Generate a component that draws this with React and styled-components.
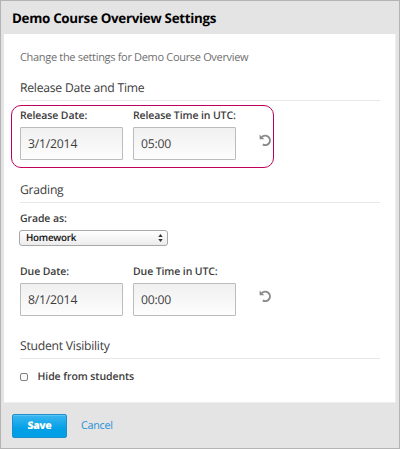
import React from "react";
import styled, { createGlobalStyle } from "styled-components";

const Global = createGlobalStyle`
  *, *::before, *::after { box-sizing: border-box; }
  body { margin: 0; font-family: "Open Sans", "Noto Sans", sans-serif; color: #3c3c3c; text-rendering: geometricPrecision; }
  input, button { text-rendering: inherit; }
`;

const Modal = styled.div`
  width: 400px;
  height: 449px;
  display: flex;
  flex-direction: column;
  background: #e4e4e4;
  border: 1px solid #b4b4b4;
`;

const Title = styled.h1`
  margin: 0;
  height: 33px;
  padding-left: 11px;
  font-size: 13.4px;
  line-height: 34px;
  font-weight: 700;
  letter-spacing: -0.32px;
  color: #000;
`;

const Panel = styled.main`
  width: 392px;
  height: 369px;
  margin-left: 3px;
  padding: 15px 16px 0;
  background: #fff;
  border-right: 1px solid #efefef;
  border-bottom: 1px solid #efefef;
`;

const Intro = styled.p`
  margin: 0;
  height: 16px;
  font-size: 11px;
  line-height: 17px;
  letter-spacing: -0.32px;
  color: #707070;
`;

const Section = styled.section`
  margin-top: ${(p) => p.$gap}px;
`;

const Heading = styled.h2`
  margin: 0;
  width: 360px;
  height: 23px;
  border-bottom: 1px solid #e8e8e8;
  font-size: 12.2px;
  line-height: 20px;
  letter-spacing: -0.25px;
  font-weight: 400;
`;

const Fields = styled.div`
  position: relative;
  display: grid;
  grid-template-columns: 103px 103px 14px;
  column-gap: 10px;
  align-items: start;
  margin-top: ${(p) => p.$gap}px;
`;

const Highlight = styled.div`
  position: absolute;
  left: -9px;
  top: -2px;
  width: 263px;
  height: 63px;
  border: 1px solid #c0005c;
  border-radius: 10px;
  pointer-events: none;
`;

const Label = styled.label`
  display: block;
  height: 20px;
  font-size: 10.5px;
  line-height: 18px;
  letter-spacing: -0.11px;
  font-weight: 600;
  white-space: nowrap;
`;

const Input = styled.input`
  display: block;
  width: 103px;
  height: 33px;
  padding: 0 7px;
  border: 1px solid #bcbcbc;
  border-radius: 1px;
  background: linear-gradient(#f0f0f0, #fdfdfd);
  font: 400 12.2px "Open Sans", sans-serif;
  letter-spacing: -0.2px;
  color: #3c3c3c;
  outline: none;
`;

const Reset = styled.button`
  width: 14px;
  height: 14px;
  margin: 26px 0 0 12px;
  padding: 0;
  border: 0;
  background: none;
  svg { display: block; }
`;

const SelectBox = styled.button`
  display: flex;
  align-items: center;
  justify-content: space-between;
  width: 149px;
  height: 16px;
  margin-left: -1px;
  padding: 0 4px 0 6px;
  border: 1px solid #a8a8a8;
  border-radius: 3px;
  background: linear-gradient(#fff, #ececec);
  font: 600 9.8px/14px "Open Sans", sans-serif;
  letter-spacing: -0.25px;
  color: #111;
`;

const CheckRow = styled.label`
  display: flex;
  align-items: center;
  gap: 9.5px;
  height: 16px;
  margin-top: 10px;
  font-size: 10.5px;
  letter-spacing: -0.08px;
  font-weight: 600;
`;

const Checkbox = styled.input`
  appearance: none;
  width: 8px;
  height: 8px;
  margin: 0;
  border: 1px solid #808080;
  border-radius: 2px;
  background: #fafafa;
`;

const Footer = styled.footer`
  display: flex;
  align-items: center;
  gap: 14px;
  height: 45px;
  padding-left: 11px;
`;

const Save = styled.button`
  width: 55px;
  height: 24px;
  padding: 0;
  border: 1px solid #1b8fcc;
  border-radius: 2px;
  background: linear-gradient(#3bb6f0, #009fe6 65%);
  box-shadow: inset 0 1px 0 #5cc5f5;
  font: 800 10.5px "Open Sans", sans-serif;
  letter-spacing: -0.4px;
  color: #fff;
`;

const Cancel = styled.a`
  font-size: 10.8px;
  line-height: 20px;
  letter-spacing: -0.3px;
  color: #1d91d9;
`;

function ResetIcon() {
  return (
    <svg width="14" height="14" viewBox="0 0 14 14" fill="none" stroke="#8a8a8a" strokeWidth="1.9">
      <path d="M3.8 4.2A4.7 4.7 0 1 1 4.8 11.4" />
      <path d="M1.6 1.5V6.2H6.3Z" fill="#8a8a8a" stroke="none" />
    </svg>
  );
}

function DateFields({ gap, name, date, time, highlighted }) {
  return (
    <Fields $gap={gap}>
      <div>
        <Label>{name} Date:</Label>
        <Input defaultValue={date} />
      </div>
      <div>
        <Label>{name} Time in UTC:</Label>
        <Input defaultValue={time} />
      </div>
      <Reset aria-label="Reset"><ResetIcon /></Reset>
      {highlighted && <Highlight />}
    </Fields>
  );
}

export default function App() {
  return (
    <>
      <Global />
      <Modal>
        <Title>Demo Course Overview Settings</Title>
        <Panel>
          <Intro>Change the settings for Demo Course Overview</Intro>
          <Section $gap={13}>
            <Heading>Release Date and Time</Heading>
            <DateFields gap={6} name="Release" date="3/1/2014" time="05:00" highlighted />
          </Section>
          <Section $gap={20}>
            <Heading>Grading</Heading>
            <Fields $gap={7}>
              <Label>Grade as:</Label>
            </Fields>
            <SelectBox>
              Homework
              <svg width="5" height="8" viewBox="0 0 5 8" fill="#333">
                <path d="M2.5 0L4.7 3H.3ZM2.5 8L.3 5H4.7Z" />
              </svg>
            </SelectBox>
            <DateFields gap={17} name="Due" date="8/1/2014" time="00:00" />
          </Section>
          <Section $gap={20}>
            <Heading>Student Visibility</Heading>
            <CheckRow><Checkbox type="checkbox" />Hide from students</CheckRow>
          </Section>
        </Panel>
        <Footer>
          <Save>Save</Save>
          <Cancel>Cancel</Cancel>
        </Footer>
      </Modal>
    </>
  );
}
